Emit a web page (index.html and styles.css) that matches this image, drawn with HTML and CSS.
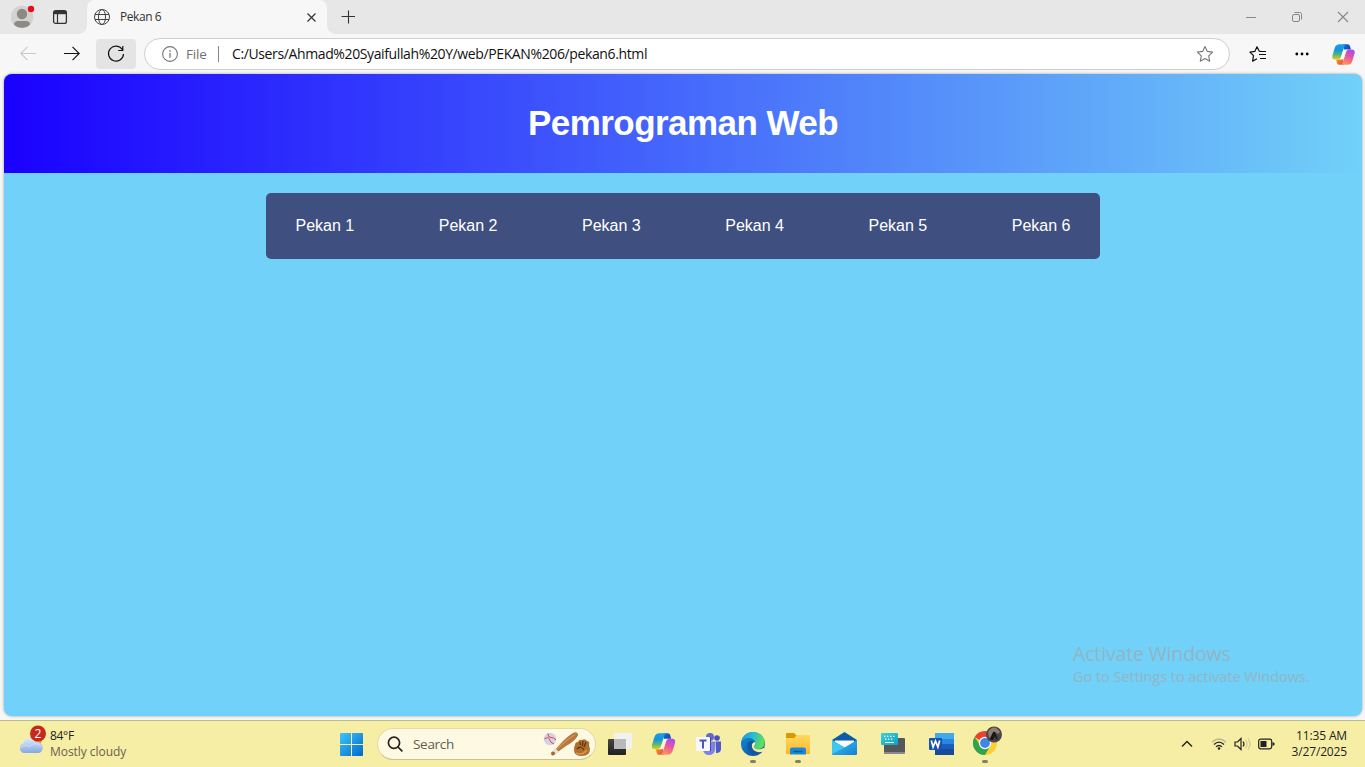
FILE: index.html
```html
<!DOCTYPE html>
<html lang="en">
<head>
<meta charset="utf-8">
<title>Pekan 6</title>
<link rel="stylesheet" href="styles.css">
</head>
<body>
<svg class="defs" width="0" height="0" aria-hidden="true">
  <defs>
    <linearGradient id="cpA" x1="0" y1="0" x2="0" y2="1"><stop offset="0" stop-color="#1b9cf0"/><stop offset=".4" stop-color="#1597d8"/><stop offset=".7" stop-color="#58b877"/><stop offset="1" stop-color="#f0cb0a"/></linearGradient>
    <linearGradient id="cpB" x1=".7" y1="0" x2=".3" y2="1"><stop offset="0" stop-color="#a050f0"/><stop offset=".45" stop-color="#e8559f"/><stop offset="1" stop-color="#ff9a55"/></linearGradient>
    <linearGradient id="cpC" x1="0" y1="0" x2="1" y2="1"><stop offset="0" stop-color="#1671d8"/><stop offset="1" stop-color="#0b35b5"/></linearGradient>
    <linearGradient id="cpD" x1="0" y1="0" x2="1" y2="1"><stop offset="0" stop-color="#f5a623"/><stop offset="1" stop-color="#e84445"/></linearGradient>
    <symbol id="copilot" viewBox="0 0 24 24">
      <path fill="url(#cpC)" d="M11.500 1.200h4.700c1.500 0 2.200.9 2.600 2.300l.9 3.300h-2.500c-2.300 0-3.200 1.300-3.900 3.400z"/>
      <path fill="url(#cpD)" d="M12.500 22.800H7.800c-1.500 0-2.200-.9-2.600-2.300l-.9-3.300h2.500c2.300 0 3.200-1.300 3.900-3.400z"/>
      <path fill="url(#cpA)" d="M8 1.200h7c-1.500.5-2 1.700-2.400 3.200L9.700 14c-.6 2-1.500 3.200-3.600 3.200H3.200C.8 17.200-.2 15.600.5 13L2.800 5.200C3.700 2.400 5.300 1.200 8 1.200z"/>
      <path fill="url(#cpB)" d="M16 22.800H9c1.500-.5 2-1.700 2.400-3.200L14.300 10c.6-2 1.500-3.200 3.600-3.200h2.900c2.400 0 3.400 1.600 2.700 4.200l-2.300 7.800c-.9 2.800-2.500 4-5.200 4z"/>
      <path fill="currentColor" d="M12 6.800h5q-2 .5-2.700 3.200l-1.300 4.500q-.8 2.700-3 2.700H7q2-.5 2.700-3.200l1.300-4.500z"/>
    </symbol>
    <linearGradient id="win" x1="0" y1="0" x2="1" y2="1"><stop offset="0" stop-color="#3fc6f8"/><stop offset="1" stop-color="#0067d0"/></linearGradient>
    <linearGradient id="cloud" x1="0" y1="0" x2="0" y2="1"><stop offset="0" stop-color="#dcebff"/><stop offset="1" stop-color="#84a8e2"/></linearGradient>
    <linearGradient id="edgeG" x1="0" y1="0" x2="1" y2=".3"><stop offset="0" stop-color="#1a8fe3"/><stop offset=".5" stop-color="#28b9d8"/><stop offset="1" stop-color="#5ee05a"/></linearGradient>
    <linearGradient id="edgeB" x1="0" y1="0" x2="1" y2="1"><stop offset="0" stop-color="#0d91dc"/><stop offset="1" stop-color="#0a4a9c"/></linearGradient>
    <linearGradient id="fold" x1="0" y1="0" x2="0" y2="1"><stop offset="0" stop-color="#ffd95c"/><stop offset="1" stop-color="#fcb72b"/></linearGradient>
    <linearGradient id="mail" x1="0" y1="0" x2="1" y2="1"><stop offset="0" stop-color="#3fc5f2"/><stop offset="1" stop-color="#117fd5"/></linearGradient>
    <linearGradient id="dark" x1="0" y1="0" x2="0" y2="1"><stop offset="0" stop-color="#454545"/><stop offset="1" stop-color="#202020"/></linearGradient>
    <linearGradient id="kb" x1="0" y1="0" x2="1" y2="1"><stop offset="0" stop-color="#35d3dd"/><stop offset="1" stop-color="#119fc0"/></linearGradient>
  </defs>
</svg>

<header class="titlebar">
  <svg class="profile" width="24" height="24" viewBox="0 0 24 24"><circle cx="11" cy="12" r="11.300" fill="#d4d2cf"/><circle cx="11" cy="9" r="5.200" fill="#8c8986"/><path d="M3 19.500c0-2.500 2-3.500 4-3.500h8c2.500 0 4 1.300 4 3.500-4 4.400-12 4.400-16 0z" fill="#8c8986"/><circle cx="20" cy="4" r="3.200" fill="#e80e18"/></svg>
  <svg class="workspace" width="16" height="16" viewBox="0 0 16 16"><rect x="1.600" y="1.600" width="12.800" height="12.800" rx="2" fill="none" stroke="#333" stroke-width="1.300"/><path d="M2 2h12v3.200H2z" fill="#333"/><path d="M5.500 5v9.500" stroke="#333" stroke-width="1.200"/></svg>
  <div class="tab">
    <svg width="18" height="18" viewBox="0 0 18 18" fill="none" stroke="#444"><circle cx="9" cy="9" r="7.500"/><ellipse cx="9" cy="9" rx="3.500" ry="7.500"/><path d="M2 6.500h14M2 11.500h14"/></svg>
    <span class="tab-title">Pekan 6</span>
    <svg class="tab-close" width="10" height="10" viewBox="0 0 10 10" stroke="#333" stroke-width="1.200"><path d="M1.500 1.500l8 8M9.500 1.500L1.500 9.500"/></svg>
  </div>
  <svg class="plus" width="14" height="14" viewBox="0 0 14 14" stroke="#333" stroke-width="1.100"><path d="M7.500 .5v13M.5 6.500h14"/></svg>
  <div class="window-buttons">
    <svg width="12" height="12" viewBox="0 0 12 12" stroke="#888"><path d="M1 6.500h10"/></svg>
    <svg width="12" height="12" viewBox="0 0 12 12" fill="none" stroke="#888"><rect x="1.500" y="3.500" width="7" height="7" rx="1.500"/><path d="M3.500 1.500H8.500Q10.500 1.500 10.500 3.500V8.500"/></svg>
    <svg width="12" height="12" viewBox="0 0 12 12" stroke="#888" stroke-width="1.100"><path d="M1 1l10 10M11 1L1 11"/></svg>
  </div>
</header>

<nav class="toolbar">
  <svg class="back" width="16" height="16" viewBox="0 0 16 16" fill="none" stroke="#cacaca" stroke-width="1.100"><path d="M16 7.500H.8M7.500 .8L.8 7.500l6.700 6.700"/></svg>
  <svg class="forward" width="16" height="16" viewBox="0 0 16 16" fill="none" stroke="#111" stroke-width="1.100"><path d="M0 7.500h15.200M8.500 .8L15.200 7.500l-6.700 6.700"/></svg>
  <div class="reload"><svg width="18" height="18" viewBox="0 0 18 18" fill="none" stroke="#111" stroke-width="1.200"><path d="M15.500 4.800A7.500 7.500 0 1 0 16.500 9M15.800 1v4.500h-4.600"/></svg></div>
  <div class="address">
    <svg width="16" height="16" viewBox="0 0 16 16" fill="none" stroke="#777"><circle cx="8" cy="8" r="7.400" stroke-width="1.100"/><path d="M8 7v4.800" stroke-width="1.300"/><path d="M8 4.300v1.400" stroke-width="1.400"/></svg>
    <span class="scheme">File</span>
    <span class="divider"></span>
    <span class="url">C:/Users/Ahmad%20Syaifullah%20Y/web/PEKAN%206/pekan6.html</span>
    <svg class="star" width="18" height="18" viewBox="0 0 18 18" fill="none" stroke="#777" stroke-width="1.100" stroke-linejoin="round"><path d="M9 1.500l2.300 4.900 5.300.7-3.900 3.700 1 5.400L9 13.600l-4.700 2.600 1-5.400L1.400 7.100l5.300-.7z"/></svg>
  </div>
  <svg class="favorites" width="18" height="18" viewBox="0 0 18 18" fill="none" stroke="#111" stroke-width="1.200" stroke-linejoin="round"><path d="M11.500 6.400L10.300 6.200 8 1.700 5.800 6.400.9 7.100l3.600 3.600-.9 5.400L8 13.700M11 6.500h6M10 9.500h7M11 13.500h6"/></svg>
  <svg class="more" width="16" height="16" viewBox="0 0 16 16"><circle cx="2.800" cy="8" r="1.400"/><circle cx="8" cy="8" r="1.400"/><circle cx="13.200" cy="8" r="1.400"/></svg>
  <svg class="copilot-button" width="23" height="23"><use href="#copilot"/></svg>
</nav>

<div class="viewport">
  <main class="page">
    <h1 class="banner">Pemrograman Web</h1>
    <ul class="menu">
      <li>Pekan 1</li><li>Pekan 2</li><li>Pekan 3</li><li>Pekan 4</li><li>Pekan 5</li><li>Pekan 6</li>
    </ul>
    <aside class="activate">
      <p class="activate-title">Activate Windows</p>
      <p class="activate-text">Go to Settings to activate Windows.</p>
    </aside>
  </main>
</div>

<footer class="taskbar">
  <div class="weather">
    <svg width="28" height="32" viewBox="0 0 28 32"><circle cx="17" cy="15" r="6" fill="#f49a26"/><path d="M4.500 28a5 5 0 0 1-.3-9.500c.8-3.500 3-5.300 6-5.300 3 0 5 1.500 6 4 4-.8 7.500 1.700 7.500 5.300 0 3.500-2 5.500-5 5.500z" fill="url(#cloud)"/><path d="M1 23q5-5 9-1 5-6 12-1" fill="none" stroke="#d5e5fc" opacity=".7"/><circle cx="19" cy="8.500" r="8" fill="#c42b1c"/><text class="badge" x="19" y="13" text-anchor="middle">2</text></svg>
    <div class="weather-text"><span class="temp">84°F</span><span class="sky">Mostly cloudy</span></div>
  </div>
  <svg class="start" width="23" height="23" viewBox="0 0 23 23" fill="url(#win)"><path d="M1 0h10v11H0V1q0-1 1-1zM12 0h10q1 0 1 1v10H12zM0 12h11v11H1q-1 0-1-1zM12 12h11v10q0 1-1 1H12z"/></svg>
  <div class="search">
    <svg width="16" height="16" viewBox="0 0 16 16" fill="none" stroke="#222" stroke-width="1.700"><circle cx="7" cy="6.800" r="5.600"/><path d="M11 11l4.300 4.300"/></svg>
    <span class="search-label">Search</span>
    <svg class="baseball" width="48" height="26" viewBox="0 0 48 26">
      <circle cx="7" cy="8" r="6.200" fill="#d6d2e6"/><path d="M1.500 8q4-3 5 .500t4.500 4.500M5 2.500q0 4 3 4t5 2.500" fill="none" stroke="#cf4550" stroke-width="1"/>
      <path d="M10 21L20 10Q26 4 31 1.500q4-1 4 3Q31 11 23 15l-11 8z" fill="#b8793c"/><path d="M14 18l10-9 8-5.500" stroke="#cb9454" stroke-width="1.500" fill="none"/><path d="M12 17l4 4-3 2-4-3z" fill="#e7e2db"/><circle cx="10" cy="22.500" r="2" fill="#a9682e"/>
      <path d="M32 14q0-3 3-3 1-3 4-2 3-2 5 1 3 0 2 4l1 4q0 7-8 7-8 0-8-6 0-4 1-5z" fill="#b06f2c"/><path d="M37 11l.5 3M40 10l-.5 5M43 11l-2 5M34 18q4-4 7 1" fill="none" stroke="#593215" stroke-width="1.200"/><path d="M33 22q6 3 11-3" stroke="#d99648" fill="none" stroke-width="1.500"/>
    </svg>
  </div>
  <div class="apps">
    <svg width="24" height="24" viewBox="0 0 24 24"><rect y="7" width="18" height="16" rx="1" fill="url(#dark)"/><rect x="6" y="1" width="18" height="16" rx="1" fill="#f1f1f1"/><path d="M6 7h12v10H6z" fill="#b9b9b9"/></svg>
    <svg class="app-copilot" width="25" height="24"><use href="#copilot"/></svg>
    <svg class="app-teams" width="26" height="24" viewBox="0 0 26 24"><circle cx="14" cy="5" r="4" fill="#6268cc"/><circle cx="21" cy="6" r="2.800" fill="#4a50b8"/><path d="M10 9.500h9V17c0 8-12 8-12 0z" fill="#7b83eb"/><path d="M19.500 9.500H25v7c0 4-3 4.500-5 4.500z" fill="#5059c9"/><path d="M5 5h10v14H5z" fill="#454aa0"/><rect y="5" width="14" height="14" rx="1" fill="#f6f7ff"/><path d="M3.500 8.500h7M7 8v8.500" stroke="#4b53bc" stroke-width="2"/></svg>
    <div class="running app-edge"><svg width="24" height="24" viewBox="0 0 24 24"><circle cx="12" cy="12" r="12" fill="url(#edgeB)"/><path d="M.4 10C3 5 13 4 14.500 11c.4 2-1.500 3-1.500 4.500 0 2 7 3 10-1.500C26 5 18 0 12 0 5 0 1 5 .4 10z" fill="url(#edgeG)"/><path d="M14.500 10.500c.4 2-1.500 3-1.500 4.500 0 3 7 3 9.500.8l1 1.700-1.500 2.500c-4.500 1.800-10 1.200-12-2.500-2-3.500.5-8 4.500-7z" fill="#f8efa5"/><path d="M8 9.500c-4 4-1 12 5 13 3 .4 6-.5 8.500-2.800-5 1.500-9.500-.7-10.500-4.700-.5-2 .3-4 1.800-5-1.500-1.400-3.500-1.400-4.800-.5z" fill="#155798"/></svg></div>
    <div class="running app-files"><svg width="24" height="24" viewBox="0 0 24 24"><path d="M0 2q0-1 1-1h7l3 3-3 3H0z" fill="#dc9800"/><path d="M0 6h8l3-3h12q1 0 1 1v18H0z" fill="url(#fold)"/><path d="M4 22.500v-5q0-2 2-2h12q2 0 2 2v5z" fill="#1b87d6"/><path d="M7.500 19.500h9" stroke="#075997" stroke-width="1.500"/></svg></div>
    <svg class="app-mail" width="25" height="24" viewBox="0 0 25 24"><path d="M0 8L12.500 0 25 8v4H0z" fill="#0b5ba8"/><path d="M3 8.500h19v6H3z" fill="#f9f9f6"/><path d="M0 8l12.500 7.500L25 8v14q0 1-1 1H1q-1 0-1-1z" fill="url(#mail)"/><path d="M0 22l12.500-6.500L0 8z" fill="#42c6ee"/></svg>
    <svg class="app-keyboard" width="24" height="24" viewBox="0 0 24 24"><rect x="3" y="6" width="21" height="16" rx="1" fill="#55575a"/><path d="M3 21h21" stroke="#9a9b9c" stroke-width="1.500"/><rect y="1" width="17" height="12" rx="1" fill="url(#kb)"/><path d="M3 4.300h11M4 7.200h9" stroke="#fff" stroke-width="1.300" stroke-dasharray="1.400 1.600"/><path d="M4 10.500h9" stroke="#fff"/></svg>
    <svg class="app-word" width="25" height="24" viewBox="0 0 25 24"><rect x="6" y="1" width="19" height="22" rx="1" fill="#1a5dbe"/><path d="M6 1h19v6H6z" fill="#3fa8ee"/><path d="M6 7h19v5H6z" fill="#2787dd"/><path d="M6 17h19v6H6z" fill="#174a9b"/><rect y="6" width="13" height="12" rx="1" fill="#1a51ac"/><path d="M2.300 8.500l1.800 6.500L6.500 9l2.400 6 1.800-6.500" fill="none" stroke="#fff" stroke-width="1.700"/></svg>
    <div class="running app-chrome"><svg width="30" height="30" viewBox="0 0 30 30"><circle cx="12" cy="17" r="12" fill="#ffce33"/><path d="M12 17L1.600 11A12 12 0 0 1 22.400 11z" fill="#e74236"/><path d="M1.600 11A12 12 0 0 0 12 29l5.200-9-9.500 0z" fill="#2da44d"/><circle cx="12" cy="17" r="6.200" fill="#fff"/><circle cx="12" cy="17" r="4.900" fill="#4285e8"/><circle cx="21" cy="8.500" r="8" fill="#4a4643"/><path d="M15 6q6-9 12 0l-2 2-3-2-3 3-3 3z" fill="#8b8073"/><path d="M17 14l2-6q2-5 4 0l2 6-2-1-1-3-2 4z" fill="#161719"/></svg></div>
  </div>
  <div class="tray">
    <svg class="chevron" width="12" height="8" viewBox="0 0 12 8" fill="none" stroke="#222" stroke-width="1.400"><path d="M1 6.500L6 1.500l5 5"/></svg>
    <svg class="wifi" width="16" height="14" viewBox="0 0 16 14" fill="none" stroke="#222" stroke-width="1.300"><path d="M1 5.200q7-6.500 14 0" stroke="#bcb68a"/><path d="M3 7.500q5-4.700 10 0M5 9.800q3-2.700 6 0"/><circle cx="8" cy="11.500" r="1.300" fill="#222" stroke="none"/></svg>
    <svg class="volume" width="17" height="14" viewBox="0 0 17 14" fill="none" stroke="#222" stroke-width="1.200"><path d="M1 5h2.500L7 1.500v11L3.500 9H1zM9 4.500q2 2.500 0 5"/><path d="M11.500 3q3 4 0 8M14 1.500q4 5.500 0 11" stroke="#d0c994"/></svg>
    <svg class="battery" width="17" height="12" viewBox="0 0 17 12"><rect x=".7" y="1.200" width="13" height="9.600" rx="2" fill="none" stroke="#222" stroke-width="1.200"/><path d="M2.500 3h6v6h-6zM14.500 4l2 1v2l-2 1z" fill="#222"/></svg>
    <div class="clock"><span class="time">11:35 AM</span><span class="date">3/27/2025</span></div>
  </div>
</footer>
</body>
</html>
```
FILE: styles.css
```css
* { box-sizing: border-box; }
body {
  margin: 0;
  width: 1365px;
  height: 767px;
  overflow: hidden;
  display: flex;
  flex-direction: column;
  background: #f7f7f7;
  font-family: "Open Sans", "Noto Sans", sans-serif;
}
svg { display: block; flex: none; }
.defs { position: absolute; }
span, p { white-space: nowrap; }

.titlebar { height: 34px; flex: none; display: flex; align-items: center; background: #e7e7e7; }
.profile { margin-left: 11px; }
.workspace { margin-left: 17px; }
.tab {
  width: 240px;
  height: 34px;
  margin-left: 19px;
  padding-left: 6px;
  display: flex;
  align-items: center;
  background: #f7f7f7;
  border-radius: 8px 8px 0 0;
  position: relative;
}
.tab::before, .tab::after {
  content: "";
  position: absolute;
  bottom: 0;
  width: 8px;
  height: 8px;
}
.tab::before { left: -8px; background: radial-gradient(circle at 0 0, #e7e7e7 7.500px, #f7f7f7 8px); }
.tab::after { right: -8px; background: radial-gradient(circle at 100% 0, #e7e7e7 7.500px, #f7f7f7 8px); }
.tab-title { margin-left: 9px; font-size: 12px; line-height: 16px; padding-bottom: 1px; color: #333; letter-spacing: -0.45px; }
.tab-close { margin-left: auto; margin-right: 11px; }
.plus { margin-left: 14px; }
.window-buttons { margin-left: auto; margin-right: 16px; display: flex; gap: 34px; }

.toolbar { height: 40px; flex: none; display: flex; align-items: center; }
.back { margin-left: 20px; }
.forward { margin-left: 28px; }
.reload {
  width: 40px;
  height: 30px;
  margin-left: 16px;
  display: flex;
  align-items: center;
  justify-content: center;
  background: #e4e4e4;
  border-radius: 4px;
}
.address {
  width: 1086px;
  height: 32px;
  margin-left: 8px;
  padding: 0 15px 0 17px;
  display: flex;
  align-items: center;
  background: #fff;
  border: 1px solid #cfcfcf;
  border-radius: 16px;
}
.scheme { margin-left: 8px; width: 32px; font-size: 13.500px; color: #707070; letter-spacing: -0.2px; }
.divider { width: 1px; height: 16px; background: #888; }
.url { margin-left: 13px; padding-bottom: 1px; font-size: 14px; color: #111; letter-spacing: -0.38px; }
.star { margin-left: auto; }
.favorites { margin-left: 19px; }
.more { margin-left: 27px; }
.copilot-button { margin-left: 22px; color: #fff; }

.viewport { height: 646px; flex: none; padding: 0 3px 4px 4px; }
.page {
  height: 642px;
  display: flex;
  flex-direction: column;
  align-items: center;
  background: #71d1f8;
  border-radius: 8px;
  overflow: hidden;
  box-shadow: 0 0 3px #999;
  font-family: "Liberation Sans", Arial, sans-serif;
}
.banner {
  width: 100%;
  height: 99px;
  margin: 0;
  padding-bottom: 1px;
  display: flex;
  align-items: center;
  justify-content: center;
  font-size: 35px;
  letter-spacing: -0.55px;
  color: #fff;
  background: linear-gradient(to right, #1a00ff, #71d1f8);
}
.menu {
  width: 834px;
  height: 66px;
  margin: 20px 0 0;
  padding: 0 29.500px;
  display: flex;
  align-items: center;
  justify-content: space-between;
  list-style: none;
  background: #3f5080;
  border-radius: 5px;
  color: #fff;
  font-size: 16px;
}
.activate {
  width: 238px;
  margin: auto 51px 29px auto;
  font-family: "Open Sans", "Noto Sans", sans-serif;
  color: #91b5c5;
}
.activate p { margin: 0; }
.activate-title { font-size: 19.500px; line-height: 26px; letter-spacing: -0.15px; }
.activate-text { font-size: 14.500px; line-height: 20px; letter-spacing: -0.03px; }

.taskbar {
  height: 47px;
  flex: none;
  display: flex;
  align-items: center;
  background: #f7eea6;
  border-top: 1px solid #bdb98e;
}
.weather { width: 321px; padding-left: 19px; display: flex; align-items: center; }
.weather > svg { margin-top: -6px; }
.badge { font: 12px "Open Sans", sans-serif; fill: #fff; }
.weather-text { margin-left: 3px; display: flex; flex-direction: column; font-size: 12px; line-height: 16px; }
.temp { color: #222; letter-spacing: -0.3px; }
.sky { color: #67634a; letter-spacing: -0.05px; }
.start { margin: 1px 0 0 19px; }
.search {
  width: 219px;
  height: 32px;
  margin-left: 14px;
  padding: 0 4px 0 9px;
  display: flex;
  align-items: center;
  background: #fdf9e3;
  border: 1px solid #e2dba4;
  border-bottom-color: #c9c28f;
  border-radius: 16px;
}
.search-label { margin-left: 10px; font-size: 13.500px; color: #605d50; letter-spacing: -0.3px; }
.baseball { margin-left: auto; }
.apps { margin-left: 12px; display: flex; align-items: center; }
.app-copilot { margin-left: 19px; color: #fbf7da; }
.app-teams { margin-left: 20px; }
.app-edge { margin-left: 19px; }
.app-files { margin-left: 21px; }
.app-mail { margin-left: 22px; }
.app-keyboard { margin-left: 24px; }
.app-word { margin-left: 24px; }
.app-chrome { margin-left: 19px; }
.running { position: relative; }
.running::after {
  content: "";
  position: absolute;
  left: 50%;
  bottom: -7px;
  width: 6px;
  height: 3px;
  margin-left: -3px;
  border-radius: 2px;
  background: #858064;
}
.app-chrome svg { margin-top: -6px; }
.app-chrome::after { left: 12px; }
.tray { margin-left: auto; margin-right: 18px; display: flex; align-items: center; }
.wifi { margin-left: 18px; }
.volume { margin-left: 7px; }
.battery { margin-left: 7px; }
.clock {
  width: 72px;
  display: flex;
  flex-direction: column;
  align-items: flex-end;
  font-size: 12px;
  line-height: 16px;
  color: #222;
}
.time { letter-spacing: -0.15px; }
.date { letter-spacing: -0.15px; }
```
